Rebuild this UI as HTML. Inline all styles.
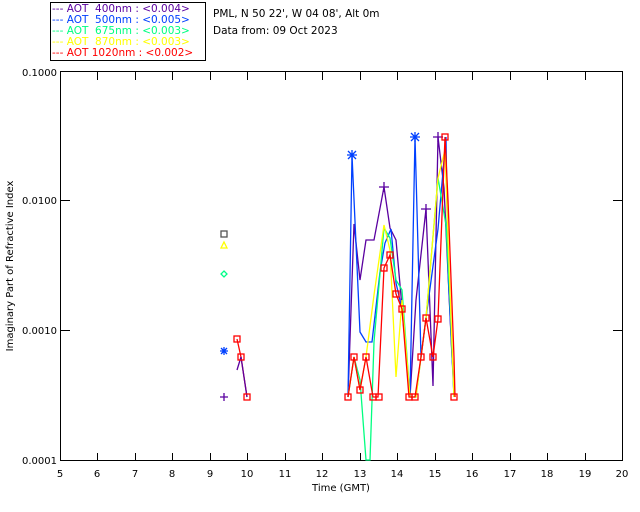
<!DOCTYPE html>
<html><head><meta charset="utf-8"><style>
html,body{margin:0;padding:0;background:#fff;}
svg{display:block;font-family:"DejaVu Sans","Liberation Sans",sans-serif;}
</style></head><body>
<svg width="640" height="512" viewBox="0 0 640 512" xmlns="http://www.w3.org/2000/svg">
<rect width="640" height="512" fill="#fff"/>
<!-- legend -->
<rect x="50.5" y="2.5" width="155" height="58" fill="none" stroke="#000"/>
<g font-size="10.5">
<text x="52" y="12" fill="#5a00a0" xml:space="preserve">--- AOT  400nm : &lt;0.004&gt;</text>
<text x="52" y="23" fill="#0040ff" xml:space="preserve">--- AOT  500nm : &lt;0.005&gt;</text>
<text x="52" y="34" fill="#00ff80" xml:space="preserve">--- AOT  675nm : &lt;0.003&gt;</text>
<text x="52" y="45" fill="#ffff00" xml:space="preserve">--- AOT  870nm : &lt;0.003&gt;</text>
<text x="52" y="56" fill="#ff0000" xml:space="preserve">--- AOT 1020nm : &lt;0.002&gt;</text>
</g>
<g font-size="10.5" fill="#000">
<text x="213" y="17">PML, N 50 22', W 04 08', Alt 0m</text>
<text x="213" y="34">Data from: 09 Oct 2023</text>
</g>
<!-- axes -->
<rect x="60.5" y="71.5" width="562" height="389" fill="none" stroke="#000"/>
<g stroke="#000">
<path d="M97.5 461v-8M135.5 461v-8M172.5 461v-8M210.5 461v-8M247.5 461v-8M285.5 461v-8M322.5 461v-8M360.5 461v-8M397.5 461v-8M435.5 461v-8M472.5 461v-8M510.5 461v-8M547.5 461v-8M585.5 461v-8"/>
<path d="M97.5 72v8M135.5 72v8M172.5 72v8M210.5 72v8M247.5 72v8M285.5 72v8M322.5 72v8M360.5 72v8M397.5 72v8M435.5 72v8M472.5 72v8M510.5 72v8M547.5 72v8M585.5 72v8"/>
<path d="M60 200.5h10M60 330.5h10M623 200.5h-10M623 330.5h-10"/>
</g>
<g font-size="10" fill="#000" text-anchor="middle">
<text x="60" y="477">5</text><text x="97" y="477">6</text><text x="135" y="477">7</text><text x="172" y="477">8</text><text x="210" y="477">9</text><text x="247" y="477">10</text><text x="285" y="477">11</text><text x="322" y="477">12</text><text x="360" y="477">13</text><text x="397" y="477">14</text><text x="435" y="477">15</text><text x="472" y="477">16</text><text x="510" y="477">17</text><text x="547" y="477">18</text><text x="585" y="477">19</text><text x="622" y="477">20</text>
<text x="341" y="491">Time (GMT)</text>
</g>
<g font-size="10" fill="#000" text-anchor="end">
<text x="57" y="76">0.1000</text><text x="57" y="204">0.0100</text><text x="57" y="334">0.0010</text><text x="57" y="464">0.0001</text>
</g>
<text font-size="10" fill="#000" transform="translate(13 266) rotate(-90)" text-anchor="middle">Imaginary Part of Refractive Index</text>
<!-- data -->
<g fill="none" stroke-width="1.3">
<polyline stroke="#5a00a0" points="348,397 354,224 360,280 366,240 374,240 384,187 390,228 396,240 402,307 410,397 416,300 426,209 433,386 438,137 444,188 452,357 455,397"/>
<polyline stroke="#0040ff" points="348,397 352,155 360,332 366,342 372,342 380,272 385,243 391,229 396,283 402,309 410,397 415,137 421,357 426,318 438,229 446,137 448,271 454,397"/>
<polyline stroke="#00ff80" points="348,397 354,357 360,380 366,460 370,460 374,342 384,228 390,238 396,280 402,290 410,397 416,397 421,357 426,318 438,178 446,225 450,300 454,397"/>
<polyline stroke="#ffff00" points="348,397 354,357 360,390 366,357 374,295 384,225 390,250 396,377 402,300 410,397 416,397 421,357 426,318 438,178 445,150 448,238 454,397"/>
<polyline stroke="#ff0000" points="348,397 354,357 360,390 366,357 373,397 378,397 384,268 390,255 396,294 402,309 409,397 415,397 421,357 426,318 433,357 438,319 445,137 448,200 454,357 455,397"/>
<polyline stroke="#ff0000" points="237,339 241,357 247,397"/>
<polyline stroke="#5a00a0" points="237,370 241,357 247,397"/>
</g>
<g fill="none" stroke-width="1.3">
<rect x="221" y="231" width="6" height="6" stroke="#555"/>
<path d="M224 242l3 6h-6z" stroke="#ff0"/>
<path d="M224 271l3 3-3 3-3-3z" stroke="#0f8"/>
<path d="M220 351h8M224 347v8M221 348l6 6M227 348l-6 6" stroke="#0040ff"/>
<path d="M220 397h8M224 393v8" stroke="#5a00a0"/>
<path d="M352 150v10M347 155h10M348 151l8 8M356 151l-8 8" stroke="#0040ff"/>
<path d="M415 132v10M410 137h10M411 133l8 8M419 133l-8 8" stroke="#0040ff"/>
<path d="M384 182v10M379 187h10M426 204v10M421 209h10M438 132v10M433 137h10" stroke="#5a00a0"/>
<g stroke="#ff0000">
<rect x="345" y="394" width="6" height="6"/><rect x="351" y="354" width="6" height="6"/><rect x="357" y="387" width="6" height="6"/><rect x="363" y="354" width="6" height="6"/><rect x="370" y="394" width="6" height="6"/><rect x="376" y="394" width="6" height="6"/><rect x="381" y="265" width="6" height="6"/><rect x="387" y="252" width="6" height="6"/><rect x="393" y="291" width="6" height="6"/><rect x="399" y="306" width="6" height="6"/><rect x="406" y="394" width="6" height="6"/><rect x="412" y="394" width="6" height="6"/><rect x="418" y="354" width="6" height="6"/><rect x="423" y="315" width="6" height="6"/><rect x="430" y="354" width="6" height="6"/><rect x="435" y="316" width="6" height="6"/><rect x="442" y="134" width="6" height="6"/><rect x="451" y="394" width="6" height="6"/><rect x="234" y="336" width="6" height="6"/><rect x="238" y="354" width="6" height="6"/><rect x="244" y="394" width="6" height="6"/>
</g>
</g>
</svg>
</body></html>
